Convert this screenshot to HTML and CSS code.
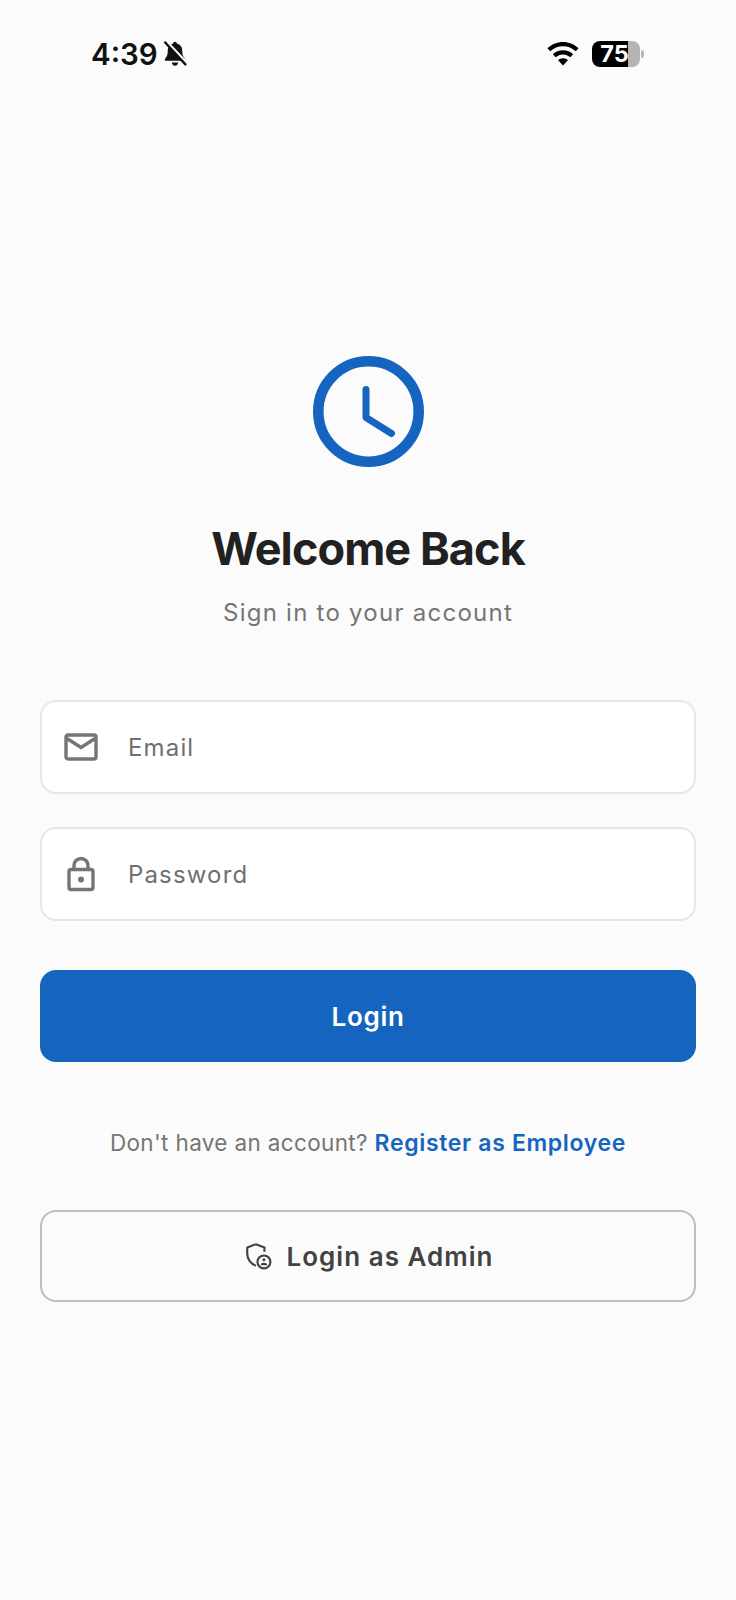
FILE: index.html
```html
<!DOCTYPE html>
<html lang="en">
<head>
<meta charset="utf-8">
<title>Login</title>
<link rel="stylesheet" href="styles.css">
</head>
<body>
<div class="status">
  <div class="status-left">
    <span class="time">4:39</span>
    <svg class="bell" viewBox="0 0 24 24" width="28" height="28"><path d="M12 1.500c-.9 0-1.500.6-1.600 1.500C7.600 3.700 5.800 6 5.800 9c0 3.800-.8 5.500-2.300 7-.6.6-.3 1.700.6 1.700h15.800c.9 0 1.200-1.100.6-1.700-1.500-1.500-2.300-3.200-2.300-7 0-3-1.800-5.300-4.600-6-.1-.9-.7-1.500-1.600-1.500zM9.300 19.200c.2 1.700 1.300 2.800 2.700 2.800s2.500-1.100 2.700-2.800z" fill="#111"/><path d="M4.500 1 23 20.500" stroke="#fbfbfb" stroke-width="2.200"/><path d="M3 1.500 21.500 21.500" stroke="#111" stroke-width="2"/></svg>
  </div>
  <div class="status-right">
    <svg class="wifi" viewBox="0 0 32 24" width="32" height="24"><path d="M16 0C10 0 4.500 2.400.4 6.300l2.900 3C6.600 6.100 11 4.200 16 4.200s9.400 1.900 12.700 5.100l2.900-3C27.500 2.400 22 0 16 0z M16 8.200c-3.900 0-7.500 1.500-10.200 4l2.900 3c2-1.700 4.500-2.800 7.300-2.800s5.300 1.100 7.300 2.800l2.900-3c-2.700-2.500-6.300-4-10.200-4z M16 16.300c-1.900 0-3.600.7-4.900 1.900L16 23.500l4.900-5.300c-1.300-1.200-3-1.900-4.900-1.900z" fill="#000"/></svg>
    <div class="battery"><span class="battery-num">75</span></div>
    <span class="battery-cap"></span>
  </div>
</div>

<main class="content">
  <svg class="clock" viewBox="0 0 111 111" width="111" height="111"><circle cx="55.500" cy="55.500" r="50.200" fill="none" stroke="#1565c0" stroke-width="10.600"/><path d="M53 33.500V61.500L78.500 77.500" fill="none" stroke="#1565c0" stroke-width="7" stroke-linecap="round" stroke-linejoin="round"/></svg>
  <h1 class="title">Welcome Back</h1>
  <p class="subtitle">Sign in to your account</p>

  <div class="field field-email">
    <svg class="field-icon" viewBox="0 0 36 30" width="36" height="30"><rect x="3" y="3" width="30" height="24" rx="2" fill="none" stroke="#757575" stroke-width="3.400"/><path d="M4 6.500 18 15.500 32 6.500" fill="none" stroke="#757575" stroke-width="3.400"/></svg>
    <span class="field-label">Email</span>
  </div>
  <div class="field field-password">
    <svg class="field-icon" viewBox="0 0 36 36" width="36" height="36"><rect x="6" y="13.500" width="24" height="20" rx="2" fill="none" stroke="#757575" stroke-width="3.400"/><path d="M11 13V9.500a7 7 0 0 1 14 0V13" fill="none" stroke="#757575" stroke-width="3.400"/><circle cx="18" cy="23.500" r="3" fill="#757575"/></svg>
    <span class="field-label">Password</span>
  </div>

  <button class="login-btn">Login</button>

  <p class="register">Don't have an account? <a class="register-link">Register as Employee</a></p>

  <button class="admin-btn">
    <svg class="admin-icon" viewBox="0 0 26 26" width="28" height="28"><path d="M11 2 3 5v6c0 5 3.400 9.400 8 11" fill="none" stroke="#424242" stroke-width="2" stroke-linejoin="round"/><path d="M11 2l8 3v4" fill="none" stroke="#424242" stroke-width="2"/><circle cx="18.500" cy="18.500" r="6" fill="none" stroke="#424242" stroke-width="2"/><circle cx="18.500" cy="16.500" r="1.400" fill="#424242"/><path d="M15.500 21.500a3 2.200 0 0 1 6 0z" fill="#424242"/></svg>
    <span>Login as Admin</span>
  </button>
</main>
</body>
</html>
```

FILE: styles.css
```css
* { box-sizing: border-box; }
html, body { margin: 0; height: 100%; }
body {
  width: 736px;
  height: 1600px;
  overflow: hidden;
  background: #fbfbfb;
  font-family: Inter, "Liberation Sans", sans-serif;
  color: #212121;
}
.status {
  display: flex;
  justify-content: space-between;
  align-items: center;
  height: 32px;
  margin-top: 38px;
  padding: 0 92px 0 91px;
}
.status-left, .status-right { display: flex; align-items: center; }
.status-left { gap: 3px; }
.time { font-size: 29.500px; font-weight: 600; color: #111; line-height: 32px; }
.bell { display: block; }
.wifi { margin-right: 13px; }
.battery {
  width: 48px;
  height: 26px;
  border-radius: 8px;
  background: linear-gradient(90deg, #000 36px, #b4b4b4 36px);
}
.battery-num {
  display: block;
  padding-right: 3px;
  text-align: center;
  font-size: 23.500px;
  line-height: 26px;
  font-weight: 700;
  color: #fff;
}
.battery-cap {
  width: 3px;
  height: 8px;
  margin-left: 1px;
  border-radius: 0 3px 3px 0;
  background: #b4b4b4;
}
.content {
  display: flex;
  flex-direction: column;
  align-items: center;
  padding: 286px 40px 0;
}
.clock { display: block; }
.title {
  margin: 54px 0 0;
  font-size: 45px;
  line-height: 56px;
  font-weight: 700;
  letter-spacing: -0.9px;
  color: #212121;
}
.subtitle {
  margin: 20px 0 0;
  font-size: 24px;
  line-height: 32px;
  letter-spacing: 1.25px;
  color: #757575;
}
.field {
  display: flex;
  align-items: center;
  width: 656px;
  height: 94px;
  border: 2px solid #e6e6e6;
  border-radius: 16px;
  background: #fff;
}
.field-email { margin-top: 71px; padding-left: 21px; }
.field-password { margin-top: 33px; padding-left: 21px; }
.field-icon { display: block; flex: none; }
.field-label {
  margin-left: 29px;
  font-size: 24px;
  letter-spacing: 1.15px;
  color: #6f6f6f;
}
.login-btn {
  display: block;
  width: 656px;
  height: 92px;
  margin-top: 49px;
  border: 0;
  border-radius: 16px;
  background: #1565c0;
  color: #fff;
  font: 600 26px Inter, "Liberation Sans", sans-serif;
  letter-spacing: 0.7px;
}
.register {
  margin: 65px 0 0;
  font-size: 22.500px;
  line-height: 32px;
  letter-spacing: 0.35px;
  color: #757575;
}
.register-link { font-size: 23px; letter-spacing: 0.66px; font-weight: 600; color: #1565c0; }
.admin-btn {
  display: flex;
  align-items: center;
  justify-content: center;
  gap: 14px;
  width: 656px;
  height: 92px;
  margin-top: 51px;
  padding-left: 8px;
  border: 2px solid #bdbdbd;
  border-radius: 16px;
  background: transparent;
  color: #424242;
  font: 600 26px Inter, "Liberation Sans", sans-serif;
  letter-spacing: 1.03px;
}
.admin-icon { display: block; }
```
